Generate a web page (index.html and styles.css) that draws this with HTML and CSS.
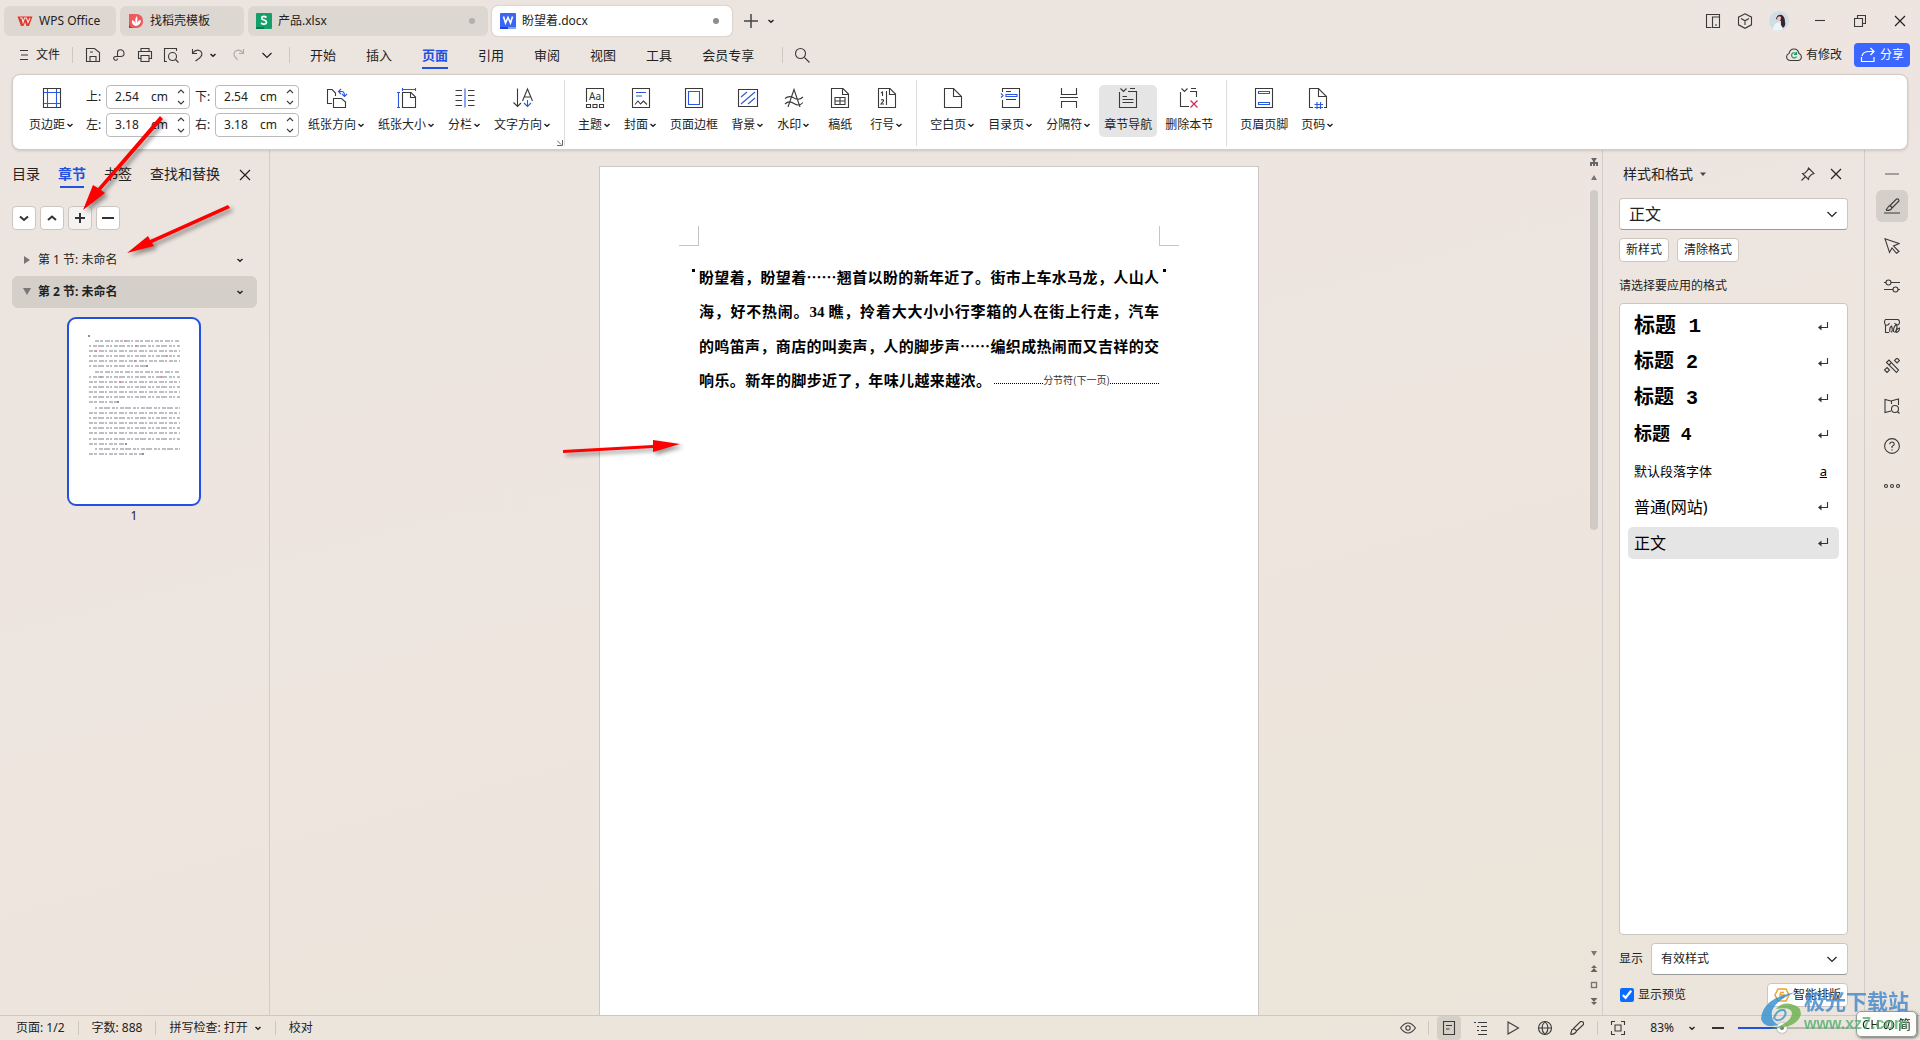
FILE: index.html
```html
<!DOCTYPE html>
<html lang="zh-CN">
<head>
<meta charset="utf-8">
<title>盼望着.docx - WPS Office</title>
<link rel="stylesheet" href="styles.css">
</head>
<body>
<svg class="defs" aria-hidden="true">
  <symbol id="chev" viewBox="0 0 8 8"><path d="M1.5 3 4 5.200 6.500 3" fill="none" stroke="currentColor" stroke-width="1.500"/></symbol>
  <symbol id="chev-big" viewBox="0 0 12 12"><path d="M1.500 4 6 8.500 10.500 4" fill="none" stroke="currentColor" stroke-width="1.200"/></symbol>
  <symbol id="cross" viewBox="0 0 12 12"><path d="M1 1 11 11M11 1 1 11" fill="none" stroke="currentColor" stroke-width="1.200"/></symbol>
  <symbol id="enter" viewBox="0 0 12 12"><path d="M10.500 1V6.500H2" fill="none" stroke="#333" stroke-width="1.100"/><path d="M4.500 3.500V9.500L1 6.500Z" fill="#333"/></symbol>
</svg>
<div class="app">
  <header class="titlebar">
    <nav class="tabs" aria-label="文档标签">
      <button class="tab tab-home"><svg class="i16" viewBox="0 0 16 16"><path d="M.5 3.500H15.500L12 13H9.500L8 9 6.500 13H4Z" fill="#e8332a"/><path d="M3 5H5L6 9.500 7.500 5H9.500L11 9.500 13 5" stroke="#f4e9e4" fill="none" stroke-width="1.100"/></svg>WPS Office</button>
      <button class="tab tab-docer"><svg class="i16" viewBox="0 0 16 16"><path d="M1 1H9Q15 2 15 8T9 15H1Z" fill="#f0585c"/><path d="M1 11Q2 15 6 15H1Z" fill="#b3323d"/><path d="M8 13Q3 12 4 7Q7 8 8 11Q6 6 9 3Q10 6 9 10Q10 7 13 7Q13 12 8 13Z" fill="#fff"/></svg>找稻壳模板</button>
      <button class="tab tab-file"><svg class="i16" viewBox="0 0 16 16"><rect width="16" height="16" rx="1" fill="#15a06a"/><path d="M0 14H8V16H0Z" fill="#0b7a4c"/><path d="M10.500 4.500Q8 2.500 6 4Q5 6.500 8 7Q11.500 8 10 10.500Q7.500 12 5 10" fill="none" stroke="#fff" stroke-width="1.700"/></svg>产品.xlsx<i class="dot"></i></button>
      <button class="tab tab-file current"><svg class="i16" viewBox="0 0 16 16"><rect width="16" height="16" rx="1" fill="#3b66f5"/><path d="M0 14H8V16H0Z" fill="#1c46d0"/><path d="M8 14H16V16H8Z" fill="#7fa2ff"/><path d="M3.500 3.500 5.500 10 8 4.500 10.500 10 12.500 3.500" fill="none" stroke="#fff" stroke-width="1.600"/></svg>盼望着.docx<i class="dot"></i></button>
    </nav>
    <button class="icon new-tab" aria-label="新建"><svg class="i16" viewBox="0 0 16 16"><path d="M8 1V15M1 8H15" stroke="#444" stroke-width="1.500"/></svg></button>
    <button class="icon" aria-label="标签列表"><svg class="i8"><use href="#chev"/></svg></button>
    <div class="window-tools">
      <button class="icon" aria-label="侧窗"><svg class="i16" viewBox="0 0 16 16"><path d="M6.500 14.500H1.500V1.500H14.500V14.500H7.500V4H14M10 12H12" class="ln"/></svg></button>
      <button class="icon" aria-label="应用"><svg class="i16" viewBox="0 0 16 16"><path d="M8 .8 14.500 4.200V11.800L8 15.300 1.500 11.800V4.200ZM4 5.500 8 7.800 12 5.500M8 7.800V12" class="ln"/></svg></button>
      <button class="icon" aria-label="账号"><svg class="i20" viewBox="0 0 20 20"><circle cx="10" cy="10" r="10" fill="#cfdde5"/><path d="M4 19Q4 12 10 11L14 18Q9 21 4 19Z" fill="#eef4f6"/><path d="M7 8Q8 3 13 4Q16 6 16 11 17 15 14 17L12 14 12 10Z" fill="#3b2430"/><path d="M8 7Q10 4 12 6Q12 10 9 11Z" fill="#efc9bb"/></svg></button>
      <button class="icon win" aria-label="最小化"><svg class="i12" viewBox="0 0 12 12"><path d="M1 5.500H11" class="ln"/></svg></button>
      <button class="icon win" aria-label="还原"><svg class="i12" viewBox="0 0 12 12"><path d="M.5 3.500H8.500V11.500H.5ZM3.500 3.500V.5H11.500V8.500H8.500" class="ln"/></svg></button>
      <button class="icon win" aria-label="关闭"><svg class="i12"><use href="#cross"/></svg></button>
    </div>
  </header>

  <div class="menubar">
    <button class="file-menu"><svg class="i12" viewBox="0 0 12 12"><path d="M2 1.500H10M3 6H10M2 10.500H10" class="ln"/></svg>文件</button>
    <i class="vline"></i>
    <div class="quick">
      <button class="icon" aria-label="保存"><svg class="i16" viewBox="0 0 16 16"><path d="M1.500 14.500V1.500H9.500L14.500 5.500V14.500ZM5 14.500V9.500H11V14.500M5 5H8" class="ln"/></svg></button>
      <button class="icon" aria-label="输出"><svg class="i12" viewBox="0 0 12 12"><path d="M4.500 7.500V3.500Q4.500 .7 7.500 .7T11 4T7.500 7.500H3Q.7 7.500 .7 9.300T2.500 11.300T4.500 9.500" class="ln"/></svg></button>
      <button class="icon" aria-label="打印"><svg class="i16" viewBox="0 0 16 16"><path d="M4 4.500V1.500H12V4.500M4 11.500H1.500V4.500H14.500V11.500H12M4 8.500H12V14.500H4Z" class="ln"/></svg></button>
      <button class="icon" aria-label="打印预览"><svg class="i16" viewBox="0 0 16 16"><path d="M4 14.500H1.500V1.500H13.500V4M12.500 12.500 15.500 15.500" class="ln"/><circle cx="9.500" cy="9.500" r="4" class="ln"/></svg></button>
      <button class="icon undo" aria-label="撤销"><svg class="i16" viewBox="0 0 16 16"><path d="M3.500 2V6.500H8M3.500 6Q8 1 12 4.500Q14.500 8 10 11.500L6.500 14" class="ln"/></svg></button>
      <button class="icon" aria-label="撤销列表"><svg class="i8"><use href="#chev"/></svg></button>
      <button class="icon redo" aria-label="恢复"><svg class="i16" viewBox="0 0 16 16"><path d="M12.500 2V6.500H8M12.500 6Q8 1 4 4.500Q1.500 8 5 11L6.500 13" class="ln"/></svg></button>
      <button class="icon" aria-label="更多"><svg class="i12"><use href="#chev-big"/></svg></button>
    </div>
    <i class="vline"></i>
    <nav class="menus">
      <a href="#">开始</a><a href="#">插入</a><a href="#" class="current">页面</a><a href="#">引用</a><a href="#">审阅</a><a href="#">视图</a><a href="#">工具</a><a href="#">会员专享</a>
    </nav>
    <i class="vline"></i>
    <button class="icon search" aria-label="搜索"><svg class="i16" viewBox="0 0 16 16"><circle cx="6.500" cy="6.500" r="5" class="ln"/><path d="M10.500 10.500 15.500 15.500" class="ln"/></svg></button>
    <div class="share-area">
      <span class="modified"><svg class="i16" viewBox="0 0 16 16"><path d="M4 13.500Q.6 13 .6 9.500Q.8 7 3 6.500Q4 2 8 2T13 6.500Q15.500 7.500 15.400 10Q15 13.500 12 13.500Z" class="ln"/><path d="M10 6.500A2.600 2.600 0 1 0 10.500 9.500M10.500 5V7.500H8" fill="none" stroke="#1a9a63" stroke-width="1.200"/></svg>有修改</span>
      <button class="share"><svg class="i16" viewBox="0 0 16 16"><path d="M1.500 10V14.500H14V10M2 9Q3 4.500 9 4.500H14M10.500 1 14 4.500 10.500 8" fill="none" stroke="#fff" stroke-width="1.200"/></svg>分享</button>
    </div>
  </div>

  <section class="ribbon" aria-label="页面">
    <button class="tool"><svg class="i20" viewBox="0 0 20 20"><path d="M1.500.5H18.500V19.500H1.500Z" class="ln"/><path d="M5.500 1V19M14.500 1V19M2 4.500H18M2 15.500H18" class="bl"/></svg><span>页边距<svg class="i8"><use href="#chev"/></svg></span></button>
    <div class="margins">
      <label for="m-top">上:</label><div class="spin"><input id="m-top" value="2.54"><span>cm</span><svg class="arrows" viewBox="0 0 8 18"><path d="M1 5 4 2 7 5M1 13 4 16 7 13" class="ln"/></svg></div>
      <label for="m-bottom">下:</label><div class="spin"><input id="m-bottom" value="2.54"><span>cm</span><svg class="arrows" viewBox="0 0 8 18"><path d="M1 5 4 2 7 5M1 13 4 16 7 13" class="ln"/></svg></div>
      <label for="m-left">左:</label><div class="spin"><input id="m-left" value="3.18"><span>cm</span><svg class="arrows" viewBox="0 0 8 18"><path d="M1 5 4 2 7 5M1 13 4 16 7 13" class="ln"/></svg></div>
      <label for="m-right">右:</label><div class="spin"><input id="m-right" value="3.18"><span>cm</span><svg class="arrows" viewBox="0 0 8 18"><path d="M1 5 4 2 7 5M1 13 4 16 7 13" class="ln"/></svg></div>
    </div>
    <button class="tool"><svg class="i20" viewBox="0 0 20 20"><path d="M5 15.500H.5V1.500H5L8.500 5V8M6.500 19.500V10.500H14.500L18.500 14V19.500Z" class="ln"/><path d="M14 1 11.500 3.500 14 6M12 3.500H15Q17.500 3.500 17.500 8M15 6 17.500 8.500 20 6" class="bl"/></svg><span>纸张方向<svg class="i8"><use href="#chev"/></svg></span></button>
    <button class="tool"><svg class="i20" viewBox="0 0 20 20"><path d="M5.500 4.500H14L18.500 9V19.500H5.500ZM13.500 5V9.500H18" class="ln"/><path d="M5 1.500H18M5.500 0V3M18.500 0V3M1.500 5V19M0 4.500H3M0 19.500H3" class="bl"/></svg><span>纸张大小<svg class="i8"><use href="#chev"/></svg></span></button>
    <button class="tool"><svg class="i20" viewBox="0 0 20 20"><path d="M.5 2.500H7M.5 7.500H7M.5 12.500H7M.5 17.500H7M13 2.500H19.500M13 7.500H19.500M13 12.500H19.500M13 17.500H19.500" class="ln"/><path d="M10 .5V19.500" class="bl"/></svg><span>分栏<svg class="i8"><use href="#chev"/></svg></span></button>
    <button class="tool"><svg class="i20" viewBox="0 0 20 20"><path d="M4.500.5V18.500M.5 14.500 4.500 18.500 8 15M9.500 13 14.500 1 19.500 13M11.500 9H17.500" class="ln"/><path d="M14.500 12V18.500M11 15 14.500 18.500 18 15" class="bl"/></svg><span>文字方向<svg class="i8"><use href="#chev"/></svg></span></button>
    <i class="vline"></i>
    <button class="tool"><svg class="i20" viewBox="0 0 20 20"><path d="M1.500 14V.5H18.500V14M1.500 16.500H5.500V19.500H1.500ZM8 16.500H12V19.500H8ZM14.500 16.500H18.500V19.500H14.500Z" class="ln"/><text x="4" y="12" class="glyph">Aa</text></svg><span>主题<svg class="i8"><use href="#chev"/></svg></span></button>
    <button class="tool"><svg class="i20" viewBox="0 0 20 20"><path d="M1.500.5H18.500V19.500H1.500ZM4 16.500 7 13 9.500 16 12.500 13 16 16.500" class="ln"/><path d="M5 4.500H15M5 8H11" class="bl"/></svg><span>封面<svg class="i8"><use href="#chev"/></svg></span></button>
    <button class="tool"><svg class="i20" viewBox="0 0 20 20"><path d="M1.500.5H18.500V19.500H1.500Z" class="ln"/><path d="M4.500 3.500H15.500V16.500H4.500Z" class="bl"/></svg><span>页面边框</span></button>
    <button class="tool"><svg class="i20" viewBox="0 0 20 20"><path d="M.5 1.500H19.500V18.500H.5Z" class="ln"/><path d="M3 9 9 4M3 16 17 4M10 16 17 10" class="bl"/></svg><span>背景<svg class="i8"><use href="#chev"/></svg></span></button>
    <button class="tool"><svg class="i20" viewBox="0 0 20 20"><path d="M4 19 10 1.500 16 19M1 10.500Q5 7 10 10T19 9M1 16Q5 12 10 15.500T19 14.500" class="ln"/></svg><span>水印<svg class="i8"><use href="#chev"/></svg></span></button>
    <button class="tool short"><svg class="i20" viewBox="0 0 20 20"><path d="M1.500.5H13L18.500 6V19.500H1.500ZM12.500 1V6.500H18M5 9.500H15V16.500H5ZM5 13H15M10 9.500V16.500" class="ln"/></svg><span>稿纸</span></button>
    <button class="tool"><svg class="i20" viewBox="0 0 20 20"><path d="M1.500.5H13L18.500 6V19.500H1.500ZM12.500 1V6.500H18M9.500 3V17" class="ln"/><path d="M4 5 5.500 4V8M4 12Q7 11 6.500 13L4 16H7" class="ln"/></svg><span>行号<svg class="i8"><use href="#chev"/></svg></span></button>
    <i class="vline"></i>
    <button class="tool"><svg class="i20" viewBox="0 0 20 20"><path d="M1.500.5H10.500L18.500 8.500V19.500H1.500ZM10.500 1V8.500H18" class="ln"/></svg><span>空白页<svg class="i8"><use href="#chev"/></svg></span></button>
    <button class="tool"><svg class="i20" viewBox="0 0 20 20"><path d="M1.500 4V.5H18.500V19.500H1.500V12M5 3.500H10M5 11.500H15" class="ln"/><path d="M5 6.500H16V8.500H5ZM0 5.500 2 7.500 0 9.500" class="bl"/></svg><span>目录页<svg class="i8"><use href="#chev"/></svg></span></button>
    <button class="tool"><svg class="i20" viewBox="0 0 20 20"><path d="M2.500 0V6.500H17.500V0M1 9.500H19M2.500 20V13.500H17.500V20" class="ln"/></svg><span>分隔符<svg class="i8"><use href="#chev"/></svg></span></button>
    <button class="tool active"><svg class="i20" viewBox="0 0 20 20"><path d="M1.500 4V19.500H18.500V3.500H10M12 .5H17M2.500.5 5.500 3.500 8.500.5M4.500 8.500H9M4.500 11.500H15.500M4.500 14.500H15.500" class="ln"/></svg><span>章节导航</span></button>
    <button class="tool"><svg class="i20" viewBox="0 0 20 20"><path d="M1.500 4V18.500H10M17.500 9V3.500H11M12 .5H17M2.500.5 5.500 3.500 8.500.5" class="ln"/><path d="M11.500 12.500 18.500 19.500M18.500 12.500 11.500 19.500" stroke="#d0305a" stroke-width="1.300"/></svg><span>删除本节</span></button>
    <i class="vline"></i>
    <button class="tool"><svg class="i20" viewBox="0 0 20 20"><path d="M1.500.5H18.500V19.500H1.500Z" class="ln"/><path d="M4.500 3.500H15.500V5.500H4.500ZM4.500 14.500H15.500V16.500H4.500Z" class="bl"/></svg><span>页眉页脚</span></button>
    <button class="tool"><svg class="i20" viewBox="0 0 20 20"><path d="M5 19.500H1.500V.5H10.500L18.500 8.500V19.500H16M10.500 1V8.500H18" class="ln"/><path d="M9 14V21M12.500 14V21M6.500 16.500H15M6.500 19.500H15" class="bl"/></svg><span>页码<svg class="i8"><use href="#chev"/></svg></span></button>
    <svg class="launcher" viewBox="0 0 6 6" aria-label="页面设置"><path d="M0 .5 4 4.500M5.500 0V5.500H0" fill="none" stroke="#666"/></svg>
  </section>

  <main class="workspace">
    <aside class="nav-pane">
      <nav class="pane-tabs"><a href="#">目录</a><a href="#" class="current">章节</a><a href="#">书签</a><a href="#">查找和替换</a><button class="icon" aria-label="关闭导航"><svg class="i12"><use href="#cross"/></svg></button></nav>
      <div class="section-tools">
        <button aria-label="下移"><svg class="i12" viewBox="0 0 12 12"><path d="M2 4.500 6 8 10 4.500" class="thick"/></svg></button>
        <button aria-label="上移"><svg class="i12" viewBox="0 0 12 12"><path d="M2 8 6 4.500 10 8" class="thick"/></svg></button>
        <button class="hover" aria-label="新增节"><svg class="i12" viewBox="0 0 12 12"><path d="M6 1V11M1 6H11" class="thick"/></svg></button>
        <button aria-label="删除节"><svg class="i12" viewBox="0 0 12 12"><path d="M0 6H12" class="thick"/></svg></button>
      </div>
      <button class="section"><svg class="i8" viewBox="0 0 8 8"><path d="M1 0 7 4 1 8Z" fill="#777"/></svg><span>第 1 节: 未命名</span><svg class="i8"><use href="#chev"/></svg></button>
      <button class="section current"><svg class="i8" viewBox="0 0 8 8"><path d="M0 0H8L4 7Z" fill="#777"/></svg><span>第 2 节: 未命名</span><svg class="i8"><use href="#chev"/></svg></button>
      <figure class="thumb">
        <svg viewBox="0 0 130 185" aria-label="第1页">
          <path d="M20 16V18" stroke="#222"/>
          <g fill="none" stroke="#a9a9b2" stroke-width="1.500">
            <path stroke-dasharray="4 1 3 2 5 1 2 2" d="M26 22H111M20 32H111M20 42H111M26 53H111M20 63H111M20 73H111M20 83H48M20 94H111M20 104H111M20 114H111M20 125H56M20 135H73"/>
            <path stroke-dasharray="2 2 4 1 6 2 3 1" d="M20 27H111M20 37H111M20 47H78M20 58H111M20 68H111M20 78H111M26 89H111M20 99H111M20 109H111M20 120H111M26 130H111"/>
          </g>
          <path d="M78 46V48M49 82V84M57 124V126M74 134V136" stroke="#222"/>
          <path d="M55 22H57M66 27H68M26 32H28M97 37H99M65 42H67M31 58H33M91 58H93M50 63H52" stroke="#dc8089" stroke-width="1.500"/>
        </svg>
        <figcaption>1</figcaption>
      </figure>
    </aside>

    <section class="canvas">
      <article class="page">
        <div class="crop-marks"><i></i><i></i></div>
        <div class="text">
          <p class="first">盼望着，盼望着……翘首以盼的新年近了。街市上车水马龙，人山人</p>
          <p>海，好不热闹。<span class="num">34</span> 瞧，拎着大大小小行李箱的人在街上行走，汽车</p>
          <p>的鸣笛声，商店的叫卖声，人的脚步声……编织成热闹而又吉祥的交</p>
          <div class="last-line"><p>响乐。新年的脚步近了，年味儿越来越浓。</p><span class="break">分节符(下一页)</span></div>
        </div>
      </article>
      <div class="scroller">
        <svg class="i8" viewBox="0 0 8 8"><path d="M1 0H7L5 3V4H8V8H6V6H5V8H3V6H2V8H0V4H3V3Z" fill="#666"/></svg>
        <svg class="i8" viewBox="0 0 8 8"><path d="M1 6 4 1 7 6Z" fill="#777"/></svg>
        <div class="track"><div class="bar"></div></div>
        <svg class="i8" viewBox="0 0 8 8"><path d="M1 2H7L4 7Z" fill="#777"/></svg>
        <svg class="i8" viewBox="0 0 8 8"><path d="M4 0 7 3H1ZM4 3 7.500 7H.5Z" fill="#666"/></svg>
        <svg class="i8" viewBox="0 0 8 8"><rect x="1.500" y="1.500" width="5" height="5" fill="none" stroke="#777" stroke-width="1.400"/></svg>
        <svg class="i8" viewBox="0 0 8 8"><path d="M4 8 7 5H1ZM4 5 7.500 1H.5Z" fill="#666"/></svg>
      </div>
    </section>

    <aside class="style-pane">
      <div class="style-head"><h2>样式和格式<svg class="i8" viewBox="0 0 8 8"><path d="M1 2.500H7L4 6Z" fill="#444"/></svg></h2>
        <button class="icon" aria-label="固定"><svg class="i16" viewBox="0 0 16 16"><path d="M8.500 2 14 7.500 11.500 8.500 9 11 8.500 13.500 5.500 10.500 2.500 7.500 5 7 7.500 4.500ZM5.500 10.500 1.500 14.500" class="ln"/></svg></button>
        <button class="icon" aria-label="关闭"><svg class="i12"><use href="#cross"/></svg></button></div>
      <div class="combo big"><select aria-label="当前样式"><option>正文</option></select><svg class="i12"><use href="#chev-big"/></svg></div>
      <div class="style-actions"><button class="plain">新样式</button><button class="plain">清除格式</button></div>
      <p class="hint">请选择要应用的格式</p>
      <ul class="styles">
        <li class="s1"><button>标题 1<svg class="i12"><use href="#enter"/></svg></button></li>
        <li class="s2"><button>标题 2<svg class="i12"><use href="#enter"/></svg></button></li>
        <li class="s2"><button>标题 3<svg class="i12"><use href="#enter"/></svg></button></li>
        <li class="s4"><button>标题 4<svg class="i12"><use href="#enter"/></svg></button></li>
        <li class="s5"><button>默认段落字体<u>a</u></button></li>
        <li><button>普通(网站)<svg class="i12"><use href="#enter"/></svg></button></li>
        <li class="current"><button>正文<svg class="i12"><use href="#enter"/></svg></button></li>
      </ul>
      <div class="show-row"><label for="show">显示</label><div class="combo"><select id="show"><option>有效样式</option></select><svg class="i12"><use href="#chev-big"/></svg></div></div>
      <div class="preview-row"><label><input type="checkbox" checked>显示预览</label><button class="plain smart"><svg class="i16" viewBox="0 0 16 16"><path d="M4 2H12L15 8 12 14H4L1 8Z" fill="none" stroke="#efa32c" stroke-width="1.500"/><path d="M10 5.500H7L6 8H10L9 10.500H5.500" fill="none" stroke="#efa32c" stroke-width="1.500"/></svg>智能排版</button></div>
    </aside>

    <aside class="side-tools">
      <button class="icon" aria-label="收起"><svg class="i16" viewBox="0 0 16 16"><path d="M1 8H15" stroke="#888" stroke-width="1.500"/></svg></button>
      <button class="icon active" aria-label="样式"><svg class="i16" viewBox="0 0 16 16"><path d="M0 15H16M2 12 5 8Q7 7.500 8 10Q7 12.500 2 12.500M5.500 8 12.500 1Q15 .5 15 3L8 10" class="ln"/></svg></button>
      <button class="icon" aria-label="选择"><svg class="i16" viewBox="0 0 16 16"><path d="M1 .7 15 5.500 9.500 8 15 13.500 12.500 15.300 8 10 5.500 14.500Z" class="ln"/></svg></button>
      <button class="icon" aria-label="设置"><svg class="i16" viewBox="0 0 16 16"><path d="M0 4.500H2M7 4.500H16M0 11.500H9M14 11.500H16" class="ln"/><circle cx="4.500" cy="4.500" r="2.500" class="ln"/><circle cx="11.500" cy="11.500" r="2.500" class="ln"/></svg></button>
      <button class="icon" aria-label="图库"><svg class="i16" viewBox="0 0 16 16"><path d="M5 14.500H1.500V7Q-.5 4 1.500 1.500H14Q17 4 14.500 6.500Q12.500 8 10.500 5M1.500 7Q4 8 5.500 5M6 14Q5 10 7.500 8Q9 11 7.500 14.500M9.500 14Q9 9 12.500 6.500Q14 11 10.500 14.500M12 14.500Q12 11 15.500 10Q15.500 14 12 14.500" class="ln"/></svg></button>
      <button class="icon" aria-label="工具箱"><svg class="i16" viewBox="0 0 16 16"><path d="M2.500 4.500 5 2 14.500 12 12.500 14.500ZM5 7 7 5" class="ln"/><path d="M13 0 15.500 2.500 13 5 10.500 2.500ZM3 9.500 5.500 12 3 14.500.5 12Z" class="ln"/></svg></button>
      <button class="icon" aria-label="查阅"><svg class="i16" viewBox="0 0 16 16"><path d="M7 13 1 14.500V1.500L7 3 14.500 1V7M7.500 3V6" class="ln"/><circle cx="11" cy="11" r="3.500" class="ln"/><path d="M13.500 13.500 15.500 15.500" class="ln"/></svg></button>
      <button class="icon" aria-label="帮助"><svg class="i16" viewBox="0 0 16 16"><circle cx="8" cy="8" r="7.400" class="ln"/><path d="M5.700 6.200Q6 4 8 4T10.300 6Q10.300 7.300 8 8.500V10M8 11.200V12.500" class="ln"/></svg></button>
      <button class="icon" aria-label="更多"><svg class="i16" viewBox="0 0 16 16"><circle cx="2" cy="8" r="1.500" class="ln"/><circle cx="8" cy="8" r="1.500" class="ln"/><circle cx="14" cy="8" r="1.500" class="ln"/></svg></button>
    </aside>
  </main>

  <footer class="status">
    <span>页面: 1/2</span><i class="vline"></i><span>字数: 888</span><i class="vline"></i><span>拼写检查: 打开<svg class="i8"><use href="#chev"/></svg></span><i class="vline"></i><span>校对</span>
    <div class="views">
      <button class="icon" aria-label="护眼"><svg class="i16" viewBox="0 0 16 16"><path d="M.5 8Q8-2 15.500 8Q8 18 .5 8Z" class="ln"/><circle cx="8" cy="8" r="2.200" class="ln"/></svg></button>
      <i class="vline"></i>
      <button class="icon active" aria-label="页面视图"><svg class="i16" viewBox="0 0 16 16"><path d="M2.500 1.500H13.500V14.500H2.500ZM5 5.500H11M5 9H8.500" class="ln"/></svg></button>
      <button class="icon" aria-label="大纲"><svg class="i16" viewBox="0 0 16 16"><path d="M1 2.500H3M5 2.500H14M4 6.500H6M8 6.500H14M4 10.500H6M8 10.500H14M5 14.500H14" class="ln"/></svg></button>
      <button class="icon" aria-label="播放"><svg class="i16" viewBox="0 0 16 16"><path d="M3 2 13.500 8 3 14Z" class="ln"/></svg></button>
      <button class="icon" aria-label="网页视图"><svg class="i16" viewBox="0 0 16 16"><circle cx="8" cy="8" r="6.500" class="ln"/><path d="M1.500 8H14.500M8 1.500Q2 8 8 14.500Q14 8 8 1.500" class="ln"/></svg></button>
      <button class="icon" aria-label="书写"><svg class="i16" viewBox="0 0 16 16"><path d="M1.500 14.500 3 9.500Q6 8 7.500 11Q6.500 14 1.500 14.500M4 9 11.500 1.500Q15 1 14.500 4.500L7.500 11" class="ln"/></svg></button>
      <i class="vline"></i>
      <button class="icon" aria-label="全屏"><svg class="i16" viewBox="0 0 16 16"><path d="M1.500 5V1.500H5M11 1.500H14.500V5M14.500 11V14.500H11M5 14.500H1.500V11M5 5H11V11H5Z" class="ln"/></svg></button>
      <button class="zoom">83%<svg class="i8"><use href="#chev"/></svg></button>
      <button class="icon" aria-label="缩小"><svg class="i12" viewBox="0 0 12 12"><path d="M0 6H12" class="thick"/></svg></button>
      <input class="slider" type="range" min="0" max="100" value="36" aria-label="显示比例">
    </div>
  </footer>
</div>

<svg class="arrow-layer" viewBox="0 0 700 480" aria-hidden="true">
  <g fill="#f00">
    <path d="M160 116 163 119 101 190 105 193 83 210 93 185 98 188Z"/>
    <path d="M228 205 230 208 152 243 154 246 127 253 148 236 150 240Z"/>
    <path d="M563 450V453L653 448V452L680 444 653 440V445Z"/>
  </g>
</svg>
<div class="watermark">
  <svg viewBox="0 0 42 38"><path d="M1 27Q2 6 36 0Q16 8 12 19Q10 28 18 33Q4 37 1 27Z" fill="#2f8fd3"/><path d="M16 17Q22 10 31 12Q41 14 41 22Q38 36 10 37Q30 32 32 22Q32 14 16 17Z" fill="#69b04b"/><path d="M14 26Q17 17 24 18Q28 22 22 27Q17 30 14 26Z" fill="none" stroke="#3a93c8" stroke-width="2"/></svg>
  <div><b>极光下载站</b><em>www.xz7.com</em></div>
</div>
<div class="ime"><span>CH</span><span>の</span><span>简</span></div>
</body>
</html>
```
FILE: styles.css
```css
* { box-sizing: border-box; }
body {
  margin: 0;
  font: 12px/16px "Noto Sans", "Noto Sans CJK SC", sans-serif;
  color: #222;
}
button, input, select { font: inherit; color: inherit; }
button { border: 0; padding: 0; background: none; }
a { color: inherit; text-decoration: none; }
p, h2, ul, figure { margin: 0; padding: 0; }
svg { flex: none; display: block; }
.defs { width: 0; height: 0; position: absolute; }
.i8 { width: 8px; height: 8px; }
.i12 { width: 12px; height: 12px; }
.i16 { width: 16px; height: 16px; }
.i20 { width: 20px; height: 20px; overflow: visible; }
.ln { fill: none; stroke: #3a3a3a; stroke-width: 1.1; }
.bl { fill: none; stroke: #2a58e0; stroke-width: 1.1; }
.thick { fill: none; stroke: #333; stroke-width: 2; }
.glyph { font-size: 10px; fill: #333; }
.icon { display: flex; align-items: center; justify-content: center; }
.vline { flex: none; width: 1px; height: 16px; background: #cfc8c1; }

.app {
  height: 100vh;
  display: flex;
  flex-direction: column;
  overflow: hidden;
  background: linear-gradient(165deg, #ebe4df 0%, #eee5df 50%, #ece5da 88%, #eae4de 100%);
}

/* title bar */
.titlebar { display: flex; align-items: center; padding: 6px 14px 0 4px; }
.tabs { display: flex; gap: 4px; }
.tab {
  height: 30px;
  display: flex;
  align-items: center;
  gap: 6px;
  padding: 0 13px 0 8px;
  border-radius: 6px;
  background: #ddd7d1;
}
.tab-home { width: 112px; padding-left: 13px; }
.tab-docer { width: 124px; }
.tab-file { width: 240px; }
.tab.current { background: #fff; box-shadow: 0 0 2px #b8b0a8; }
.dot { width: 6px; height: 6px; border-radius: 50%; background: #b5b0ac; margin-left: auto; }
.current .dot { background: #8d8d8d; }
.new-tab { margin: 0 8px 0 11px; }
.window-tools { margin-left: auto; display: flex; align-items: center; gap: 16px; }
.win { margin-left: 12px; }
.win:nth-child(4) { margin-left: 9px; }

/* menu bar */
.menubar { height: 38px; display: flex; align-items: center; padding: 0 10px 0 18px; }
.file-menu { display: flex; align-items: center; gap: 6px; margin-right: 12px; }
.quick { display: flex; align-items: center; gap: 10px; margin: 0 12px; }
.quick .icon:nth-child(2) { width: 16px; }
.quick .undo + .icon { margin-left: -6px; }
.redo { opacity: 0.35; margin-left: 4px; }
.quick .icon:last-child { width: 20px; }
.menus { display: flex; gap: 30px; margin: 0 28px 0 20px; font-size: 13px; }
.menus a { line-height: 20px; padding: 3px 0 2px; border-bottom: 2px solid transparent; }
.menus .current { color: #2450e0; border-color: #2450e0; font-weight: bold; }
.search { margin-left: 11px; }
.share-area { margin-left: auto; display: flex; align-items: center; gap: 12px; }
.modified, .share { display: flex; align-items: center; gap: 4px; }
.share { height: 24px; padding: 0 6px; background: #3b66ff; color: #fff; border-radius: 4px; }

/* ribbon */
.ribbon {
  height: 76px;
  flex: none;
  position: relative;
  margin: 0 12px;
  padding: 10px 11px;
  display: flex;
  align-items: flex-start;
  gap: 3px;
  background: #fff;
  border: 1px solid #d3cbc5;
  border-radius: 8px;
  box-shadow: 0 1px 3px #0002;
  z-index: 1;
}
.tool {
  flex: none;
  height: 52px;
  padding: 3px 5px;
  display: flex;
  flex-direction: column;
  align-items: center;
  gap: 9px;
  border-radius: 5px;
}
.tool span { display: flex; align-items: center; gap: 1px; }
.tool.active { background: #e5e5e5; }
.tool.short { width: 44px; }
.ribbon .vline { height: 66px; margin: -5px 5px 0; background: #ddd; }
.launcher { position: absolute; left: 544px; bottom: 3px; width: 6px; height: 6px; }
.margins {
  display: grid;
  grid-template-columns: 15px 84px 15px 84px;
  grid-auto-rows: 24px;
  gap: 4px 5px;
  align-items: center;
  margin: 0 1px 0 4px;
}
.spin { height: 24px; display: flex; align-items: center; border: 1px solid #bbb; border-radius: 4px; padding: 0 4px 0 8px; }
.spin input { width: 36px; padding: 0; border: 0; background: none; outline: 0; }
.spin .arrows { width: 8px; height: 18px; margin-left: auto; }

/* workspace */
.workspace { flex: 1; min-height: 0; display: flex; }
.nav-pane { width: 270px; flex: none; border-right: 1px solid #d0cccc; padding: 12px 12px 0; }
.pane-tabs { display: flex; gap: 18px; font-size: 14px; align-items: center; }
.pane-tabs a { line-height: 24px; padding-bottom: 2px; }
.pane-tabs .current { color: #2450e0; font-weight: bold; background: linear-gradient(#2450e0, #2450e0) center bottom / 24px 2px no-repeat; }
.pane-tabs .icon { margin-left: 1px; }
.section-tools { display: flex; gap: 4px; margin: 18px 0 14px; }
.section-tools button {
  width: 24px;
  height: 24px;
  display: grid;
  place-items: center;
  background: #fff;
  border: 1px solid #cdc6c0;
  border-radius: 4px;
}
.section-tools .hover { background: #f4f3f2; }
.section { width: 100%; height: 32px; display: flex; align-items: center; gap: 7px; padding: 0 13px 0 11px; border-radius: 6px; }
.section svg:last-child { margin-left: auto; }
.section.current { background: #d5cfc9; font-weight: bold; }
.thumb { width: 134px; margin: 9px auto 0 55px; text-align: center; }
.thumb > svg { width: 134px; height: 189px; background: #fff; border: 2px solid #2450e0; border-radius: 9px; }
.thumb figcaption { margin-top: 2px; }

.canvas { flex: 1; min-width: 0; display: flex; justify-content: center; }
.page { width: 660px; margin: 16px auto 0; background: #fff; border: 1px solid #cbc9c6; border-bottom: 0; padding: 59px 79px 0; }
.crop-marks { display: flex; justify-content: space-between; }
.crop-marks i { width: 20px; height: 20px; border: solid #c4c4c4; border-width: 0 1px 1px 0; }
.crop-marks i:last-child { border-width: 0 0 1px 1px; }
.text { margin: 14px 20px 0; font: bold 15px/34px "Noto Sans CJK SC", sans-serif; color: #000; }
.text p { text-align-last: justify; white-space: nowrap; }
.num { font-family: "Liberation Serif", serif; }
.first { position: relative; }
.first::before, .first::after { content: ""; position: absolute; top: 9px; left: -7px; width: 3px; height: 3px; background: #000; }
.first::after { left: auto; right: -7px; }
.last-line { display: flex; align-items: center; gap: 3px; }
.last-line p { flex: none; width: 292px; }
.break { flex: 1; display: flex; align-items: center; font: 10px/14px "Noto Sans CJK SC", sans-serif; color: #333; white-space: nowrap; }
.break::before, .break::after { content: ""; flex: 1; border-bottom: 1px dotted #000; margin-top: 6px; }
.scroller { width: 14px; flex: none; display: flex; flex-direction: column; align-items: center; gap: 8px; padding: 8px 2px 10px 0; }
.track { flex: 1; display: flex; padding-bottom: 12px; }
.bar { width: 8px; height: 46%; border-radius: 4px; background: #d0cac6; }

.style-pane { width: 263px; flex: none; border-left: 1px solid #d0cccc; border-right: 1px solid #d0cccc; padding: 14px 16px 8px; display: flex; flex-direction: column; }
.style-head { display: flex; align-items: center; gap: 14px; padding: 0 6px 0 4px; height: 20px; }
.style-head h2 { flex: 1; display: flex; align-items: center; gap: 6px; font-size: 14px; font-weight: normal; }
.combo { display: grid; flex: 1; align-items: center; }
.combo.big { flex: none; margin: 14px 0 8px; font-size: 16px; }
.combo select, .combo svg { grid-area: 1 / 1; }
.combo select { appearance: none; height: 32px; width: 100%; padding: 0 9px; border: 1px solid #cdc6c0; border-bottom-color: #999; border-radius: 4px; background: #fff; }
.combo svg { justify-self: end; margin-right: 10px; pointer-events: none; }
.style-actions { display: flex; gap: 8px; }
.plain { height: 24px; padding: 0 6px; background: #fff; border: 1px solid #cdc6c0; border-radius: 4px; }
.hint { margin: 16px 0 9px; }
.styles { flex: 1; list-style: none; background: #fff; border: 1px solid #cdc6c0; border-radius: 4px; padding: 7px 8px; display: flex; flex-direction: column; gap: 4px; font-size: 16px; color: #000; }
.styles button { width: 100%; height: 32px; display: flex; align-items: center; justify-content: space-between; padding: 0 10px 0 6px; border-radius: 5px; white-space: pre; }
.styles .current { background: #e5e5e5; border-radius: 5px; }
.s1, .s2, .s4 { font-family: "Liberation Mono", "Noto Sans CJK SC", monospace; font-weight: bold; }
.s1 { font-size: 21px; }
.s2 { font-size: 20px; }
.s4 { font-size: 18px; }
.s5 { font-size: 13px; }
.styles u { padding-right: 2px; }
.show-row { display: flex; align-items: center; gap: 8px; margin-top: 8px; }
.preview-row { display: flex; align-items: center; justify-content: space-between; margin-top: 8px; }
.preview-row label { display: flex; align-items: center; gap: 4px; }
.preview-row input { width: 14px; height: 14px; margin: 0 0 0 1px; accent-color: #0a6cff; }
.smart { display: flex; align-items: center; gap: 3px; }
.side-tools { width: 55px; flex: none; display: flex; flex-direction: column; align-items: center; gap: 8px; padding: 16px 2px 0 0; }
.side-tools .icon { width: 32px; height: 32px; border-radius: 6px; }
.side-tools .icon:first-child { height: 16px; }
.side-tools .active { background: #d5cfc9; }

/* status bar */
.status { height: 25px; flex: none; display: flex; align-items: center; gap: 13px; padding-left: 16px; border-top: 1px solid #cdc8c0; }
.status span { display: flex; align-items: center; gap: 6px; }
.status .vline { height: 14px; }
.views { margin-left: auto; padding-right: 64px; display: flex; align-items: center; gap: 8px; }
.views .icon { width: 24px; height: 24px; border-radius: 4px; }
.views .active { background: #d5d0c7; }
.zoom { display: flex; align-items: center; gap: 14px; margin: 0 2px 0 12px; }
.slider { appearance: none; width: 118px; height: 12px; margin: 0; background: linear-gradient(90deg, #2450e0 38%, #bbb6b0 38%) center / 100% 2px no-repeat; }
.slider::-webkit-slider-thumb { appearance: none; width: 10px; height: 10px; border-radius: 50%; background: #777; border: 3px solid #fff; box-shadow: 0 0 2px #777; }

/* overlays */
.arrow-layer { position: absolute; left: 0; top: 0; width: 700px; height: 480px; z-index: 3; pointer-events: none; filter: drop-shadow(3px 3px 2px #0006); }
.watermark { position: fixed; right: 11px; bottom: 6px; display: flex; align-items: center; gap: 2px; pointer-events: none; opacity: 0.8; z-index: 3; }
.watermark svg { width: 42px; height: 38px; }
.watermark b, .watermark em { display: block; font-style: normal; font-weight: bold; }
.watermark b { font-size: 21px; line-height: 26px; color: #3f86cc; }
.watermark em { font: bold 16px/20px "Liberation Sans", sans-serif; color: #53b06e; }
.ime { position: fixed; right: 3px; bottom: 3px; width: 61px; height: 26px; display: flex; align-items: center; justify-content: space-between; padding: 0 5px; background: #fffd; border: 1px solid #999; border-radius: 5px; box-shadow: 1px 1px 3px #0008; z-index: 2; font-size: 13px; }
```
